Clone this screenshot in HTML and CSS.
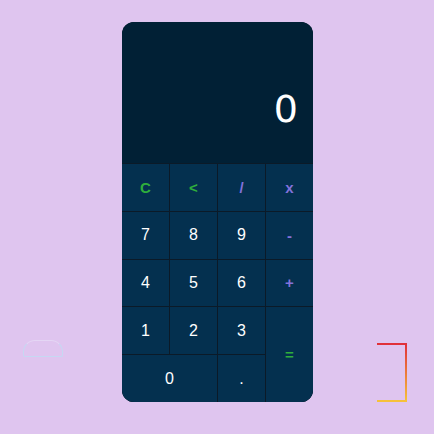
FILE: index.html
```html
<!DOCTYPE html>
<html>
<head>
<meta charset="utf-8">
<link rel="stylesheet" href="styles.css">
</head>
<body>
<div class="calc">
  <div class="display">0</div>
  <div class="keys">
    <div class="key op-green">C</div>
    <div class="key op-green">&lt;</div>
    <div class="key op-purple">/</div>
    <div class="key op-purple">x</div>
    <div class="key">7</div>
    <div class="key">8</div>
    <div class="key">9</div>
    <div class="key op-purple">-</div>
    <div class="key">4</div>
    <div class="key">5</div>
    <div class="key">6</div>
    <div class="key op-purple">+</div>
    <div class="key">1</div>
    <div class="key">2</div>
    <div class="key">3</div>
    <div class="key op-green equals">=</div>
    <div class="key zero">0</div>
    <div class="key">.</div>
  </div>
</div>
<div class="deco-left"></div>
<div class="deco-right"></div>
</body>
</html>
```
FILE: styles.css
```css
html, body {
  margin: 0;
  padding: 0;
}
body {
  width: 434px;
  height: 434px;
  background: #dfc5ef;
  font-family: "Liberation Sans", Arial, sans-serif;
  position: relative;
  overflow: hidden;
}
.calc {
  width: 191px;
  height: 380px;
  margin: 22px 0 0 122px;
  border-radius: 12px;
  overflow: hidden;
  background: #0b1a28;
  display: flex;
  flex-direction: column;
}
.display {
  height: 141px;
  background: #012035;
  color: #ffffff;
  font-family: "DejaVu Sans", "Liberation Sans", sans-serif;
  font-size: 38px;
  display: flex;
  align-items: center;
  justify-content: flex-end;
  padding: 32px 15px 0 0;
  box-sizing: border-box;
}
.keys {
  flex: 1;
  display: grid;
  grid-template-columns: repeat(4, 1fr);
  grid-template-rows: repeat(5, 1fr);
  gap: 1px;
  padding-top: 1px;
  background: #0b1a28;
}
.key {
  background: #04304f;
  color: #ffffff;
  font-size: 16px;
  display: flex;
  align-items: center;
  justify-content: center;
}
.op-green {
  color: #2fae3c;
  font-weight: bold;
  font-size: 15px;
}
.op-purple {
  color: #8372dc;
  font-weight: bold;
  font-size: 15px;
}
.equals {
  grid-column: 4;
  grid-row: 4 / span 2;
}
.zero {
  grid-column: 1 / span 2;
}
.deco-left {
  position: absolute;
  left: 23px;
  top: 340px;
  width: 38px;
  height: 15px;
  border: 1.5px solid #c6d8f2;
  border-top-color: #e4d6f4;
  border-radius: 12px 12px 2px 2px;
}
.deco-right {
  position: absolute;
  left: 377px;
  top: 343px;
  width: 28px;
  height: 55px;
  border: 2px solid transparent;
  border-left: none;
  border-image: linear-gradient(#e0303a, #f6c23a) 1;
}
```
